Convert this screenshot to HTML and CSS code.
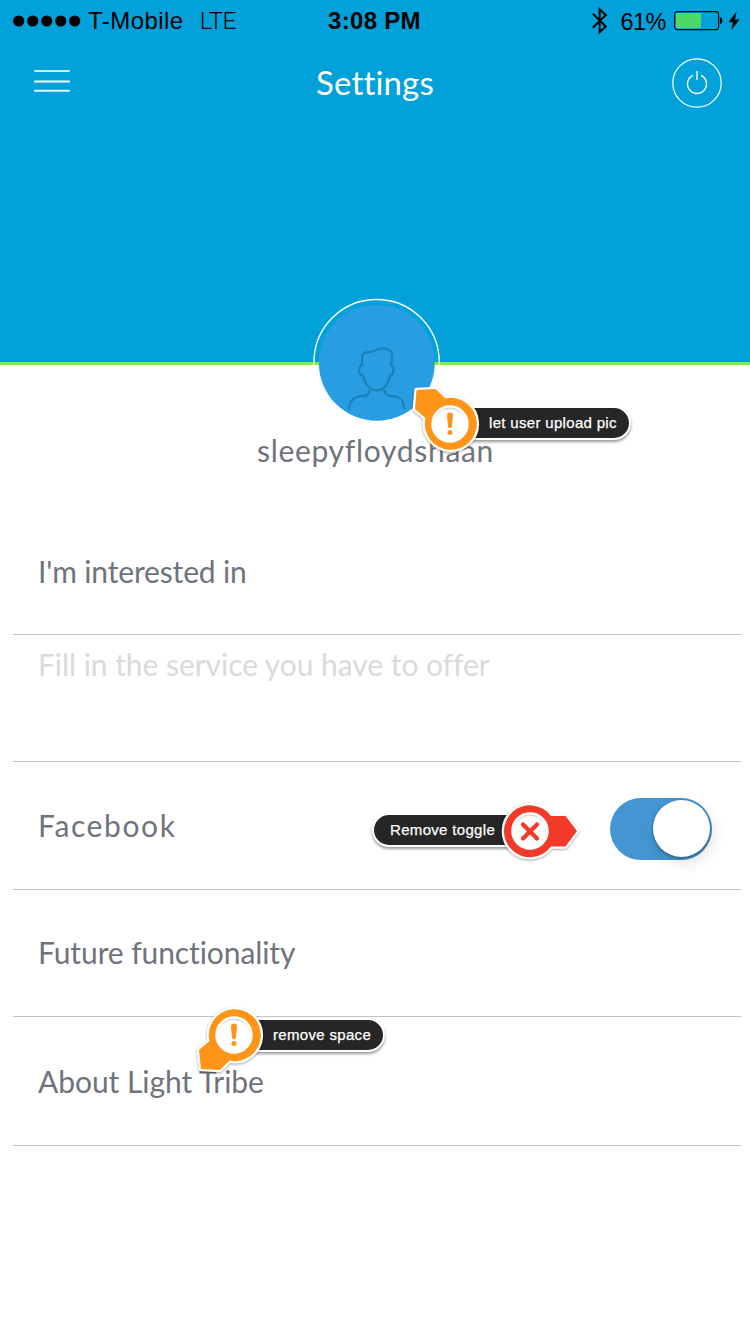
FILE: index.html
```html
<!DOCTYPE html>
<html lang="en">
<head>
<meta charset="utf-8">
<title>Settings</title>
<link rel="stylesheet" href="styles.css">
</head>
<body>
<main class="screen">
  <header class="hero">
    <div class="status">
      <div class="status-left">
        <svg class="signal" width="68" height="12" viewBox="0 0 68 12"><circle cx="5.7" cy="6" r="5.6"/><circle cx="19.7" cy="6" r="5.6"/><circle cx="33.7" cy="6" r="5.6"/><circle cx="47.7" cy="6" r="5.6"/><circle cx="61.7" cy="6" r="5.6"/></svg>
        <span class="carrier">T-Mobile</span>
        <span class="network">LTE</span>
      </div>
      <span class="time">3:08 PM</span>
      <div class="status-right">
        <svg class="bluetooth" width="18" height="28" viewBox="0 0 18 28"><path d="M1.8 6.6 14.8 19.5 8.6 25.2V2.3L14.8 8 1.8 20.8" fill="none" stroke="#000" stroke-width="2"/></svg>
        <span class="percent">61%</span>
        <svg class="battery" width="50" height="20" viewBox="0 0 50 20"><rect x=".6" y=".6" width="44" height="18" rx="2.8" fill="none" stroke="#000" stroke-width="1.2"/><rect x="2" y="2" width="25" height="15.2" rx="1" fill="#4cd964"/><path d="M46 6.2c3 .5 3 6.4 0 7z"/></svg>
        <svg class="bolt" width="12" height="20" viewBox="0 0 12 20"><path d="M8.6.5.5 11.2H5L3 19.5 11.5 8.4H7z"/></svg>
      </div>
    </div>
    <nav class="nav">
      <svg class="menu" width="36" height="24" viewBox="0 0 36 24" stroke="#fff" stroke-width="2" stroke-linecap="round"><path d="M1 2H35" opacity=".82"/><path d="M1 12.4H35"/><path d="M1 21.7H35" opacity=".9"/></svg>
      <h1 class="title">Settings</h1>
      <svg class="power" width="50" height="50" viewBox="0 0 50 50" fill="none" stroke="#fff"><circle cx="25" cy="25" r="24.2" stroke-width="1.2"/><path d="M20.9 17.4A9.5 9.5 0 1 0 29.1 17.4" stroke-width="1.4"/><path d="M25 13V22" stroke-width="1.4"/></svg>
    </nav>
  </header>

  <section class="profile">
    <svg class="avatar" width="130" height="124" viewBox="312 298 130 124">
      <path d="M314 364.500V362A62.500 62.500 0 0 1 439.200 362V364.500" fill="none" stroke="#fff" stroke-width="1.400"/>
      <circle cx="376.800" cy="362.700" r="58" fill="#289de1"/>
      <g fill="none" stroke="#1c80b8" stroke-width="2.200" stroke-linejoin="round" stroke-linecap="butt">
        <path d="M362 366.500V357C362 354 363.500 352.800 366.500 352.300C370 351.800 372 352.300 375 350.500C380 347.500 388 347.300 391.300 352C393 355 391.500 358 391.300 366.500"/>
        <path d="M362 364.500C359.500 365.500 358.800 367.500 359.300 371C359.800 375 361 375.500 362.900 375.500C364.500 383 369.500 390.600 376.800 390.600C384 390.600 388.700 383 390.100 375.500C391.500 375.500 392.700 375.500 393.200 372C394 368 393.500 366 391.300 365.500"/>
        <path d="M370 389.500C369 393 368 395.800 364 395.800C354 395.800 349.200 400 349 409.500M384 389.500C385 393 386.500 395.800 390.500 395.800C400 395.800 404 400 404.200 409.500"/>
      </g>
    </svg>
    <p class="username">sleepyfloydshaan</p>
  </section>

  <section class="list">
    <div class="row interest">I'm interested in</div>
    <div class="row offer">Fill in the service you have to offer</div>
    <div class="row facebook"><span>Facebook</span><span class="toggle"><span class="knob"></span></span></div>
    <div class="row future">Future functionality</div>
    <div class="row about">About Light Tribe</div>
  </section>

  <aside class="note note-upload"><span class="label">let user upload pic</span>
    <svg class="pin" width="80" height="80" viewBox="-40 -40 80 80">
      <defs><radialGradient id="inset" cx=".5" cy=".56" r=".56"><stop offset=".84" stop-color="#fff"/><stop offset="1" stop-color="#999"/></radialGradient></defs>
      <path class="outline" d="M-24.500-6-35-15-33.500-34-14.500-35-4.500-25.600A26 26 0 1 1-24.500-6Z"/>
      <path class="warn" d="M-24.500-6-35-15-33.500-34-14.500-35-4.500-25.600A26 26 0 1 1-24.500-6Z"/>
      <circle class="disc" r="17.500" fill="url(#inset)"/><path class="warn" d="M-3-8.500Q-3-11.500 0-11.500T3-8.500L1.900 3Q0 5.500-1.900 3Z"/><circle class="warn" cy="8.500" r="2.500"/>
    </svg></aside>
  <aside class="note note-toggle"><span class="label">Remove toggle</span>
    <svg class="pin" width="100" height="80" viewBox="-40 -40 100 80">
      <path class="outline" d="M21-15H35.500L47 0 35.500 15.500H21A26 26 0 1 1 21-15Z"/>
      <path class="stop" d="M21-15H35.500L47 0 35.500 15.500H21A26 26 0 1 1 21-15Z"/>
      <circle class="disc" r="17.500" fill="url(#inset)"/><path d="M-7-6.500 7 7.500M7-6.500-7 7.500" stroke="#f23a29" stroke-width="4.300" stroke-linecap="round"/>
    </svg></aside>
  <aside class="note note-space"><span class="label">remove space</span>
    <svg class="pin" width="80" height="80" viewBox="-40 -40 80 80">
      <path class="outline" d="M-24.500 6-35 15-33 34-14 35-4.500 25.600A26 26 0 1 0-24.500 6Z"/>
      <path class="warn" d="M-24.500 6-35 15-33 34-14 35-4.500 25.600A26 26 0 1 0-24.500 6Z"/>
      <circle class="disc" r="17.500" fill="url(#inset)"/><path class="warn" d="M-3-8.500Q-3-11.500 0-11.500T3-8.500L1.900 3Q0 5.500-1.900 3Z"/><circle class="warn" cy="8.500" r="2.500"/>
    </svg></aside>
</main>
</body>
</html>
```
FILE: styles.css
```css
* { box-sizing: border-box; }
body { margin: 0; background: #fff; }
.screen { position: relative; width: 750px; height: 1334px; overflow: hidden; background: #fff; font-family: Lato, sans-serif; font-variant-ligatures: none; color: #6f737c; }

.hero { height: 365px; background: #02a1da; border-bottom: 3px solid #7fea5c; }
.status { display: grid; grid-template-columns: 1fr auto 1fr; align-items: center; height: 41px; padding: 0 10px 0 13px; font: 24px/41px "Liberation Sans", sans-serif; color: #000; }
.status-left, .status-right { display: flex; align-items: center; }
.status-right { justify-content: flex-end; }
.carrier { margin-left: 7px; letter-spacing: .45px; }
.network { margin-left: 16px; padding-top: 1px; font-family: Roboto, sans-serif; font-weight: 300; line-height: 38px; letter-spacing: -.4px; }
.time { margin-right: 4px; font-weight: bold; letter-spacing: .3px; }
.percent { margin: 0 8px 0 11px; padding-top: 2px; font-size: 23.500px; line-height: 38px; letter-spacing: -.5px; }
.bolt { margin-left: 4px; }

.nav { display: grid; grid-template-columns: 1fr auto 1fr; align-items: center; height: 84px; padding: 0 28px 0 34px; }
.menu { margin-bottom: 4px; }
.title { margin: 0 6px 3px 0; font-size: 33px; font-weight: 400; line-height: 40px; letter-spacing: .15px; color: #fff; }
.power { justify-self: end; }

.profile { display: flex; flex-direction: column; align-items: center; height: 212px; margin-top: -67px; }
.avatar { flex: none; margin-left: 4px; }
.username { margin: 9px 0 0 1px; font-size: 30px; line-height: 38px; letter-spacing: .7px; }

.list { margin: 0 9px 0 13px; }
.row { display: flex; align-items: center; height: 127px; padding: 0 29px 2px 25px; border-bottom: 1.500px solid #c3c4ca; font-size: 30px; line-height: 38px; white-space: nowrap; }
.interest { height: 125px; letter-spacing: -.15px; }
.offer { align-items: flex-start; padding-top: 10px; color: #dadada; letter-spacing: -.05px; }
.facebook { justify-content: space-between; height: 128px; letter-spacing: 1.600px; }
.future { letter-spacing: -.1px; }
.about { height: 129px; padding-bottom: 0; letter-spacing: -.05px; }

.toggle { display: flex; justify-content: flex-end; align-items: center; width: 102px; height: 62px; margin-top: 8px; padding-right: 2px; border-radius: 31px; background: #4495d1; }
.knob { width: 57px; height: 57px; border-radius: 50%; background: #fff; box-shadow: 0 1px 3px rgba(0,0,0,.4), 3px 6px 14px rgba(0,0,0,.12); }

/* Review notes float over the screen */
.note { position: absolute; font: 15px/30px "Liberation Sans", sans-serif; color: #fff; }
.label { display: block; height: 30px; border-radius: 15px; background: #262626; box-shadow: 0 0 0 2px #fff, 0 2px 3px 2px rgba(0,0,0,.4); letter-spacing: .32px; -webkit-text-stroke: .25px #fff; white-space: nowrap; }
.pin { position: absolute; overflow: visible; filter: drop-shadow(0 1.500px 1px rgba(0,0,0,.35)); }
.outline { fill: #fff; stroke: #fff; stroke-width: 4.500; stroke-linejoin: round; }
.warn { fill: #ff9518; }
.stop { fill: #f23a29; }
.disc { stroke: #fff; stroke-width: 2.500; }
.note-upload { left: 449px; top: 408px; }
.note-upload .label { width: 180px; padding-left: 40px; }
.note-upload .pin { left: -39.500px; top: -24.500px; }
.note-toggle { left: 374px; top: 815px; }
.note-toggle .label { width: 156px; padding-left: 16px; }
.note-toggle .pin { left: 116px; top: -24.500px; }
.note-space { left: 234px; top: 1020px; }
.note-space .label { width: 149px; padding-left: 39px; }
.note-space .pin { left: -40px; top: -25px; }
```
